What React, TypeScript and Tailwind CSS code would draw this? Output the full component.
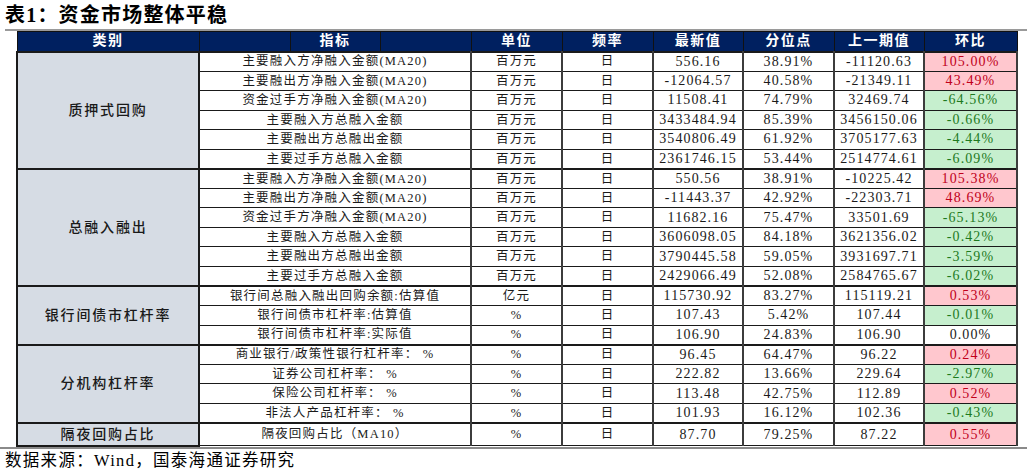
type Tone = "up" | "down" | "flat";

type Row = {
  name: string;
  unit: string;
  latest: string;
  pct: string;
  prev: string;
  chg: string;
  tone: Tone;
};

type Group = { title: string; rows: Row[] };

const groups: Group[] = [
  {
    title: "质押式回购",
    rows: [
      { name: "主要融入方净融入金额(MA20)", unit: "百万元", latest: "556.16", pct: "38.91%", prev: "-11120.63", chg: "105.00%", tone: "up" },
      { name: "主要融出方净融入金额(MA20)", unit: "百万元", latest: "-12064.57", pct: "40.58%", prev: "-21349.11", chg: "43.49%", tone: "up" },
      { name: "资金过手方净融入金额(MA20)", unit: "百万元", latest: "11508.41", pct: "74.79%", prev: "32469.74", chg: "-64.56%", tone: "down" },
      { name: "主要融入方总融入金额", unit: "百万元", latest: "3433484.94", pct: "85.39%", prev: "3456150.06", chg: "-0.66%", tone: "down" },
      { name: "主要融出方总融出金额", unit: "百万元", latest: "3540806.49", pct: "61.92%", prev: "3705177.63", chg: "-4.44%", tone: "down" },
      { name: "主要过手方总融入金额", unit: "百万元", latest: "2361746.15", pct: "53.44%", prev: "2514774.61", chg: "-6.09%", tone: "down" },
    ],
  },
  {
    title: "总融入融出",
    rows: [
      { name: "主要融入方净融入金额(MA20)", unit: "百万元", latest: "550.56", pct: "38.91%", prev: "-10225.42", chg: "105.38%", tone: "up" },
      { name: "主要融出方净融入金额(MA20)", unit: "百万元", latest: "-11443.37", pct: "42.92%", prev: "-22303.71", chg: "48.69%", tone: "up" },
      { name: "资金过手方净融入金额(MA20)", unit: "百万元", latest: "11682.16", pct: "75.47%", prev: "33501.69", chg: "-65.13%", tone: "down" },
      { name: "主要融入方总融入金额", unit: "百万元", latest: "3606098.05", pct: "84.18%", prev: "3621356.02", chg: "-0.42%", tone: "down" },
      { name: "主要融出方总融出金额", unit: "百万元", latest: "3790445.58", pct: "59.05%", prev: "3931697.71", chg: "-3.59%", tone: "down" },
      { name: "主要过手方总融入金额", unit: "百万元", latest: "2429066.49", pct: "52.08%", prev: "2584765.67", chg: "-6.02%", tone: "down" },
    ],
  },
  {
    title: "银行间债市杠杆率",
    rows: [
      { name: "银行间总融入融出回购余额:估算值", unit: "亿元", latest: "115730.92", pct: "83.27%", prev: "115119.21", chg: "0.53%", tone: "up" },
      { name: "银行间债市杠杆率:估算值", unit: "%", latest: "107.43", pct: "5.42%", prev: "107.44", chg: "-0.01%", tone: "down" },
      { name: "银行间债市杠杆率:实际值", unit: "%", latest: "106.90", pct: "24.83%", prev: "106.90", chg: "0.00%", tone: "flat" },
    ],
  },
  {
    title: "分机构杠杆率",
    rows: [
      { name: "商业银行/政策性银行杠杆率： %", unit: "%", latest: "96.45", pct: "64.47%", prev: "96.22", chg: "0.24%", tone: "up" },
      { name: "证券公司杠杆率： %", unit: "%", latest: "222.82", pct: "13.66%", prev: "229.64", chg: "-2.97%", tone: "down" },
      { name: "保险公司杠杆率： %", unit: "%", latest: "113.48", pct: "42.75%", prev: "112.89", chg: "0.52%", tone: "up" },
      { name: "非法人产品杠杆率： %", unit: "%", latest: "101.93", pct: "16.12%", prev: "102.36", chg: "-0.43%", tone: "down" },
    ],
  },
  {
    title: "隔夜回购占比",
    rows: [
      { name: "隔夜回购占比（MA10）", unit: "%", latest: "87.70", pct: "79.25%", prev: "87.22", chg: "0.55%", tone: "up" },
    ],
  },
];

const toneClass: Record<Tone, string> = {
  up: "bg-[#ffc7ce] text-[#c0001a]",
  down: "bg-[#c6efce] text-[#1e7a1e]",
  flat: "bg-white text-[#222]",
};

const serif = "font-['Liberation_Serif','Noto_Sans_CJK_SC',serif]";

const cell =
  "p-0 text-center whitespace-nowrap leading-none border-x-2 border-x-[#3c3c3c] border-y border-y-[#1a1a1a]";
const cn = "text-[12.5px] tracking-[1.2px]";
const num = "text-[14px] tracking-[1.1px]";

const headers = ["单位", "频率", "最新值", "分位点", "上一期值", "环比"];

export default function App() {
  return (
    <div className={`w-[1032px] h-[474px] bg-white text-[#1a1a1a] ${serif}`}>
      <div className="h-[29px] pl-[5px] pt-[3px] text-[20px] font-bold leading-[24px] tracking-[1.2px] text-black">
        表1：资金市场整体平稳
      </div>
      <div className="ml-[5px] w-[1022px] h-[2px] bg-[#9a9a9a]" />

      <table className="ml-[16px] w-[1000px] table-fixed border-collapse">
        <colgroup>
          <col className="w-[182px]" />
          <col className="w-[91px]" />
          <col className="w-[90px]" />
          <col className="w-[91px]" />
          <col className="w-[91px]" />
          <col className="w-[91px]" />
          <col className="w-[90px]" />
          <col className="w-[91px]" />
          <col className="w-[90px]" />
          <col className="w-[93px]" />
        </colgroup>
        <thead>
          <tr className="h-[20px] bg-[#002060] text-white text-[14px] font-bold tracking-[1.5px]">
            <th className="p-0 text-center font-bold border border-[#111] leading-none">类别</th>
            <th className="p-0 border border-[#111]" />
            <th className="p-0 text-center font-bold border border-[#111] leading-none">指标</th>
            <th className="p-0 border border-[#111]" />
            {headers.map((h) => (
              <th key={h} className="p-0 text-center font-bold border border-[#111] leading-none">
                {h}
              </th>
            ))}
          </tr>
        </thead>
        <tbody>
          {groups.map((g) =>
            g.rows.map((r, i) => {
              const top = i === 0 ? "border-t-2 border-t-[#1a1a1a]" : "";
              return (
                <tr key={g.title + i} className="h-[19.55px]">
                  {i === 0 && (
                    <td
                      rowSpan={g.rows.length}
                      className="p-0 text-center align-middle whitespace-nowrap bg-[#d6dce4] border-2 border-[#1a1a1a] text-[14px] font-medium tracking-[1.8px] text-[#1a1a1a]"
                    >
                      {g.title}
                    </td>
                  )}
                  <td colSpan={3} className={`${cell} ${cn} ${top} bg-white`}>
                    {r.name}
                  </td>
                  <td className={`${cell} ${cn} ${top} bg-white`}>{r.unit}</td>
                  <td className={`${cell} ${cn} ${top} bg-white`}>日</td>
                  <td className={`${cell} ${num} ${top} bg-white`}>{r.latest}</td>
                  <td className={`${cell} ${num} ${top} bg-white`}>{r.pct}</td>
                  <td className={`${cell} ${num} ${top} bg-white`}>{r.prev}</td>
                  <td className={`${cell} ${num} ${top} ${toneClass[r.tone]}`}>{r.chg}</td>
                </tr>
              );
            })
          )}
        </tbody>
      </table>

      <div className="w-[1027px] h-[2px] bg-[#8a8a8a]" />
      <div className="pl-[5px] pt-[2px] text-[16.5px] leading-[20px] tracking-[1.3px] text-black">
        数据来源：Wind，国泰海通证券研究
      </div>
    </div>
  );
}
